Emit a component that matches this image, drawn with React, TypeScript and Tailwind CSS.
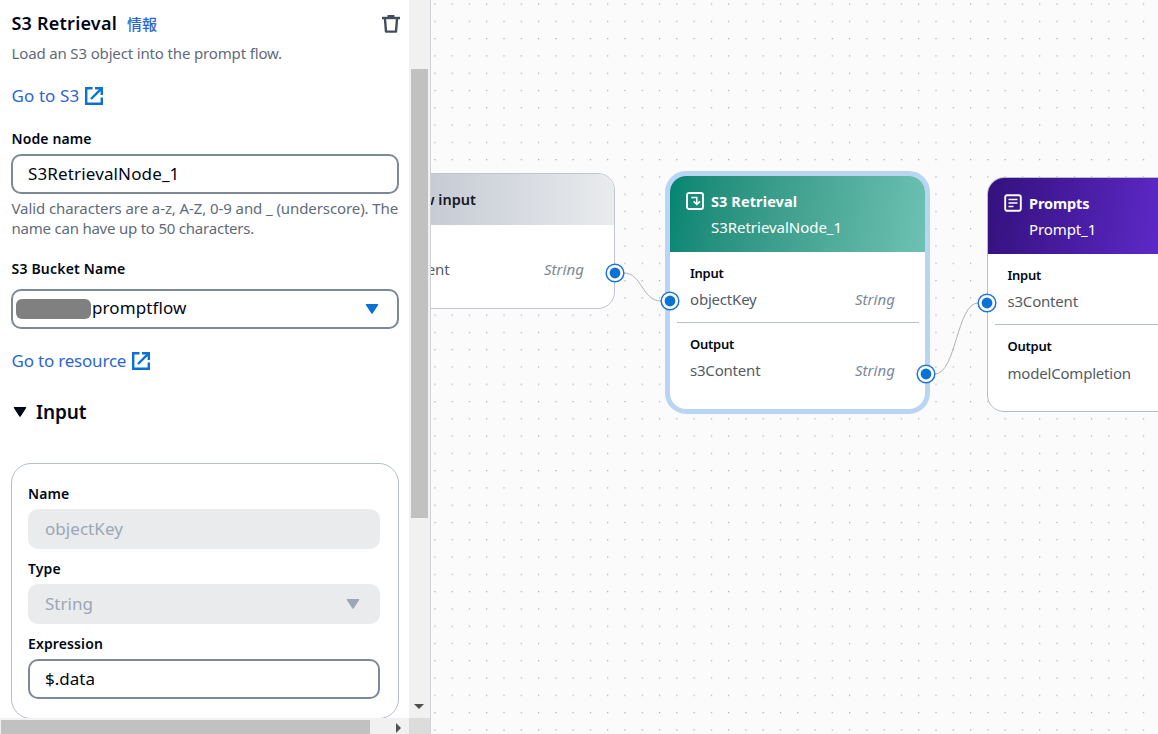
import type { ReactNode } from 'react'

interface FieldProps {
    label: string;
    children: ReactNode;
}

interface PortProps {
    name: string;
    type?: string;
}

function ExternalIcon() {
    return (
        <svg className="w-[18px] h-[18px] shrink-0" viewBox="0 0 18 18" fill="none" stroke="#0972d3" strokeWidth="2.4">
            <path d="M7.5 1.2H1.2v15.6h15.6V10.5" />
            <path d="M10 1.2h6.8V8" />
            <path d="M16.4 1.6L6 12" />
        </svg>
    )
}

function TrashIcon() {
    return (
        <svg className="w-[18px] h-[18px]" viewBox="0 0 18 18" fill="none" stroke="#414d5c" strokeWidth="2.4">
            <path d="M0 3h18" />
            <path d="M5.5 1h7" strokeWidth="2" />
            <path d="M2.9 3l1.1 13.6h10l1.1-13.6" strokeLinejoin="round" />
        </svg>
    )
}

function Caret({ className }: { className: string }) {
    return (
        <svg className={`w-[14px] h-[12px] ${className}`} viewBox="0 0 14 12" fill="currentColor" stroke="currentColor" strokeWidth="1.5" strokeLinejoin="round">
            <path d="M1.5 1.7h11L7 10z" />
        </svg>
    )
}

function Field({ label, children }: FieldProps) {
    return (
        <div className="h-[75px]">
            <div className="h-[30px] leading-[30px] text-[14px] font-semibold tracking-[0.12px] text-[#000716]">{label}</div>
            {children}
        </div>
    )
}

function Handle({ className }: { className: string }) {
    return (
        <svg className={`absolute w-5 h-5 ${className}`} viewBox="0 0 20 20">
            <circle cx="10" cy="10" r="8.8" fill="white" stroke="#2074d5" strokeWidth="1.5" />
            <circle cx="10" cy="10" r="5.4" fill="#0972d3" />
        </svg>
    )
}

function Port({ name, type }: PortProps) {
    return (
        <div className="h-8 pl-5 pr-[30px] flex items-center justify-between text-[15px] text-[#545b64]">
            <span className="tracking-[-0.2px]">{name}</span>
            {type && <span className="italic tracking-[0.05px] text-[#7d8998]">{type}</span>}
        </div>
    )
}

function PortTitle({ children }: { children: ReactNode }) {
    return <div className="h-[21px] leading-[21px] pl-5 text-[13px] font-semibold tracking-[-0.25px] text-[#000716]">{children}</div>
}

function Canvas() {
    return (
        <div className="relative flex-1 overflow-hidden bg-[#fbfbfb]">
            <svg className="absolute inset-0 w-full h-full">
                <defs>
                    <pattern id="dots" x="3.3" y="3.5" width="17.28" height="17.28" patternUnits="userSpaceOnUse">
                        <circle cx="0.65" cy="0.65" r="0.6" fill="#91919a" />
                    </pattern>
                </defs>
                <rect width="100%" height="100%" fill="url(#dots)" />
                <g fill="none" stroke="#b1b1b7" strokeWidth="1">
                    <path d="M193 273C211 273 211 301 230 301" />
                    <path d="M504 374C525 374 526 303 547 303" />
                </g>
            </svg>

            {/* flow input */}
            <div className="absolute left-[-73px] top-[173px] w-[257px] h-[136px] rounded-[17px] border border-[#c0c5cf] bg-white overflow-hidden">
                <div className="h-[51px] pl-[43px] leading-[50px] bg-linear-to-r from-[#b9bfcb] to-[#e9ebed] text-[14.5px] font-semibold text-[#16191f]">Flow input</div>
                <div className="pt-[28px]">
                    <Port name="document" type="String" />
                </div>
            </div>

            {/* s3 retrieval */}
            <div className="absolute left-[234px] top-[171px] w-[265px] h-[243px] rounded-[21px] border-5 border-[#b8d6f3] bg-white overflow-hidden">
                <div className="h-[76px] pt-[12px] bg-linear-100 from-[#008571] to-[#6dc1b3] text-white">
                    <div className="h-[26px] pl-4 flex items-center gap-[7px]">
                        <svg className="w-[18px] h-[18px]" viewBox="0 0 18 18" fill="none" stroke="white" strokeWidth="1.9">
                            <rect x="1" y="1" width="16" height="16" rx="2" />
                            <path d="M5.2 5.4h5.6v6.6" strokeWidth="1.5" />
                            <path d="M7.6 9.4l3.2 3 3.2-3" strokeWidth="1.5" />
                        </svg>
                        <span className="pt-[2px] text-[14.5px] font-bold tracking-[0.1px]">S3 Retrieval</span>
                    </div>
                    <div className="h-[26px] leading-[26px] pl-[41px] text-[15px] tracking-[-0.03px]">S3RetrievalNode_1</div>
                </div>
                <div className="pt-[11px]">
                    <PortTitle>Input</PortTitle>
                    <div className="-mt-px">
                        <Port name="objectKey" type="String" />
                    </div>
                    <div className="mt-[7px] mb-[11px] ml-[7px] mr-[6px] h-px bg-[#b6bec9]" />
                    <PortTitle>Output</PortTitle>
                    <div className="-mt-px">
                        <Port name="s3Content" type="String" />
                    </div>
                </div>
            </div>

            {/* prompts */}
            <div className="absolute left-[556px] top-[177px] w-[257px] h-[235px] rounded-[17px] border border-[#b6bec9] bg-white overflow-hidden">
                <div className="h-[76px] pt-[12px] bg-linear-100 from-[#33117d] to-[#7334ec] text-white">
                    <div className="h-[26px] pl-4 flex items-center gap-[7px]">
                        <svg className="w-[18px] h-[18px]" viewBox="0 0 18 18" fill="none" stroke="white" strokeWidth="1.9">
                            <rect x="1.2" y="1.2" width="15.6" height="15.6" rx="2" />
                            <path d="M4.5 5.4h9M4.5 9h9M4.5 12.5h5" strokeWidth="1.5" />
                        </svg>
                        <span className="pt-[2px] text-[14.5px] font-bold tracking-[-0.1px]">Prompts</span>
                    </div>
                    <div className="h-[26px] leading-[26px] pl-[41px] text-[15px] tracking-[-0.1px]">Prompt_1</div>
                </div>
                <div className="pt-[11px] -ml-[0.5px]">
                    <PortTitle>Input</PortTitle>
                    <div className="-mt-px">
                        <Port name="s3Content" />
                    </div>
                    <div className="mt-[7px] mb-[11px] ml-[7.5px] mr-[6px] h-px bg-[#b6bec9]" />
                    <PortTitle>Output</PortTitle>
                    <Port name="modelCompletion" />
                </div>
            </div>

            <Handle className="left-[174px] top-[263px]" />
            <Handle className="left-[229px] top-[291px]" />
            <Handle className="left-[485px] top-[364px]" />
            <Handle className="left-[546px] top-[293px]" />
        </div>
    )
}

export default function App() {
    return (
        <div className="flex w-[1158px] h-[734px] overflow-hidden bg-white font-['Noto_Sans','Noto_Sans_CJK_JP',sans-serif]">
            <div className="w-[409px] flex flex-col shrink-0">
                <div className="h-[718px] pl-[11px] pr-[10px] overflow-hidden">
                    <div className="h-[47px] flex items-center pl-[0.5px] -mr-px">
                        <h2 className="text-[18px] font-semibold tracking-[0.22px] text-[#000716]">S3 Retrieval</h2>
                        <a className="ml-[10px] pt-px flex-1 text-[15px] font-medium text-[#2b67cf]">情報</a>
                        <TrashIcon />
                    </div>
                    <div className="-mt-px h-[14px] leading-[14px] pl-[0.5px] text-[15px] tracking-[-0.15px] text-[#5f6b7a] whitespace-nowrap">Load an S3 object into the prompt flow.</div>
                    <a className="mt-[22px] h-7 pl-[0.5px] flex items-center gap-[5.5px] text-[17px] tracking-[0.1px] text-[#2b67cf]">
                        Go to S3 <ExternalIcon />
                    </a>

                    <div className="mt-[14px] h-[30px] leading-[30px] pl-[0.5px] text-[14px] font-semibold tracking-[0.12px] text-[#000716]">Node name</div>
                    <div className="h-10 rounded-[10px] border-2 border-[#7d8998] px-[15px] leading-9 text-[17px] tracking-[0.14px] text-[#000716]">S3RetrievalNode_1</div>
                    <div className="mt-[4px] pl-[0.5px] text-[15px] leading-5 tracking-[-0.09px] text-[#5f6b7a] whitespace-nowrap">
                        Valid characters are a-z, A-Z, 0-9 and _ (underscore). The
                        <br />
                        <span className="tracking-[-0.22px]">name can have up to 50 characters.</span>
                    </div>

                    <div className="mt-[16px] h-[30px] leading-[30px] pl-[0.5px] text-[14px] font-semibold tracking-[0.2px] text-[#000716]">S3 Bucket Name</div>
                    <div className="mt-[5px] h-10 rounded-[10px] border-2 border-[#7d8998] pl-[3px] pr-[18px] flex items-center text-[17px] tracking-[0.1px] text-[#000716]">
                        <span className="w-[75px] h-5 rounded-[6px] bg-[#808080]" />
                        <span className="ml-px flex-1 -mt-[3px]">promptflow</span>
                        <Caret className="text-[#0972d3]" />
                    </div>
                    <a className="mt-[18px] h-7 pl-[0.5px] flex items-center gap-[5.5px] text-[17px] tracking-[-0.2px] text-[#2b67cf]">
                        Go to resource <ExternalIcon />
                    </a>

                    <div className="mt-[21px] h-8 pl-[2px] flex items-center gap-[9px] text-[19px] font-semibold tracking-[-0.1px] text-[#000716]">
                        <Caret className="text-[#000716]" />
                        Input
                    </div>

                    <div className="mt-[35px] h-[256px] rounded-[20px] border border-[#b6bec9] pl-[16px] pr-[18px] pt-[15px] text-[17px]">
                        <Field label="Name">
                            <div className="h-10 rounded-[10px] bg-[#e9ebed] px-[17px] leading-10 tracking-[0.05px] text-[#9ba7b6]">objectKey</div>
                        </Field>
                        <Field label="Type">
                            <div className="h-10 rounded-[10px] bg-[#e9ebed] pl-[17px] pr-5 flex items-center justify-between text-[#9ba7b6]">
                                String
                                <Caret className="text-[#9ba7b6]" />
                            </div>
                        </Field>
                        <Field label="Expression">
                            <div className="h-10 rounded-[10px] border-2 border-[#7d8998] px-[15px] leading-9 text-[#000716]">$.data</div>
                        </Field>
                    </div>
                </div>

                {/* horizontal scrollbar */}
                <div className="h-4 bg-[#f1f1f1] pt-[2px] pl-px pr-[8px] flex items-center">
                    <div className="w-[369px] h-[14px] bg-[#c1c1c1]" />
                    <svg className="mt-[2px] ml-auto w-[5px] h-[10px]" viewBox="0 0 5 10" fill="#505050">
                        <path d="M0 0l5 5-5 5z" />
                    </svg>
                </div>
            </div>

            {/* vertical scrollbar */}
            <div className="w-[22px] shrink-0 flex flex-col border-r border-[#d0d3d7] bg-[#f1f1f1]">
                <div className="mt-[69px] ml-[2px] w-[17px] h-[449px] bg-[#c1c1c1]" />
                <svg className="mt-auto mb-[9px] ml-[5px] w-[10px] h-[5px]" viewBox="0 0 10 5" fill="#505050">
                    <path d="M0 0h10L5 5z" />
                </svg>
                <div className="h-4 bg-[#dcdcdc]" />
            </div>

            <Canvas />
        </div>
    )
}
